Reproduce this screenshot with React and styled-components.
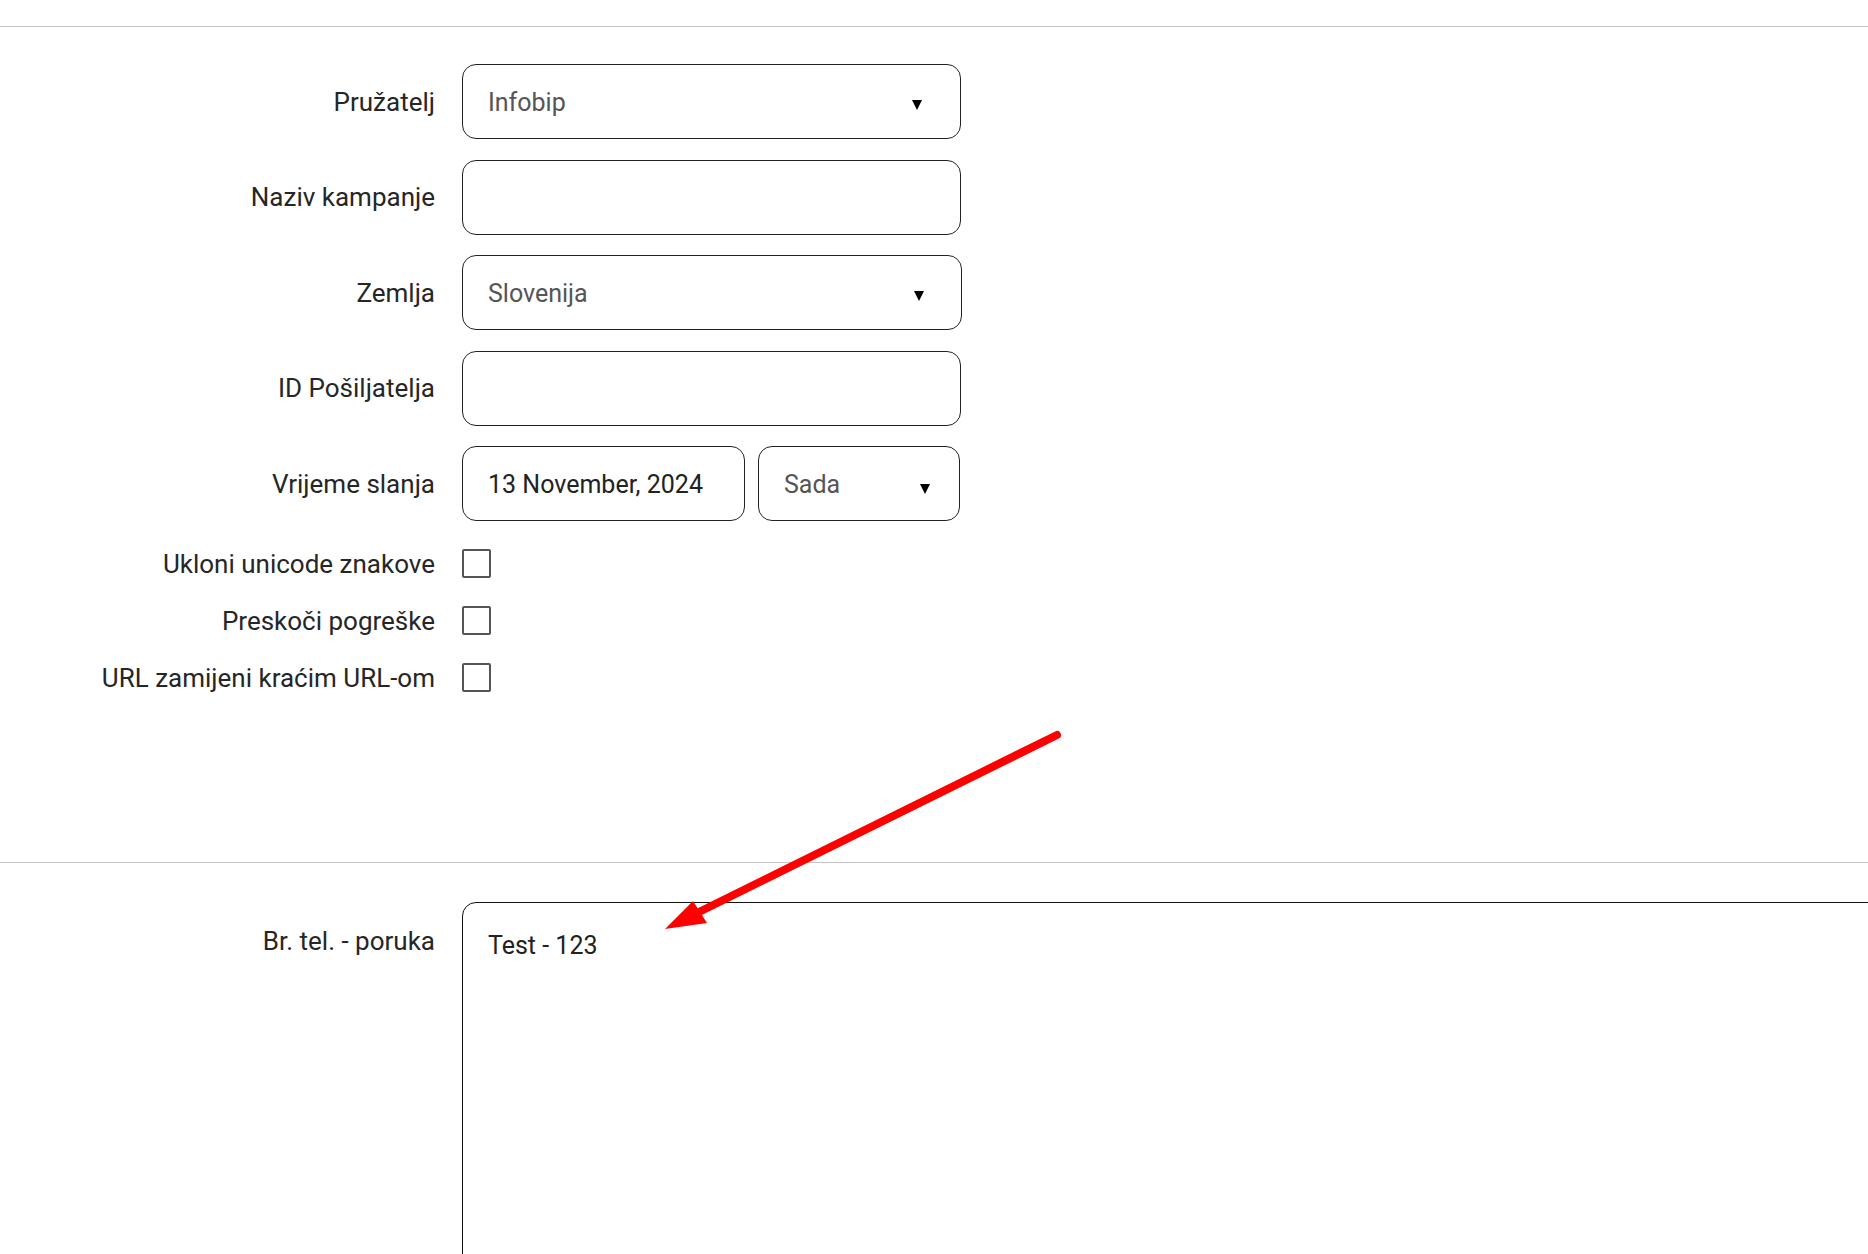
import React from "react";
import styled, { createGlobalStyle } from "styled-components";

const GlobalStyle = createGlobalStyle`
  html, body {
    margin: 0;
    padding: 0;
    background: #fff;
  }
  body {
    font-family: Roboto, "Liberation Sans", Arial, sans-serif;
    overflow: hidden;
  }
`

const Page = styled.div`
  position: relative;
  width: 1868px;
  height: 1254px;
  overflow: hidden;
  padding-top: 26px;
  box-sizing: border-box;
`

const Divider = styled.hr`
  margin: 0;
  border: 0;
  height: 1px;
  background: #c4c4c4;
`

const Section = styled.div`
  display: flex;
  flex-direction: column;
  padding: 37px 0 170px;
`

const FieldGroup = styled.div`
  display: flex;
  flex-direction: column;
  gap: ${p => p.gap}px;
  margin-top: ${p => p.top || 0}px;
`

const Row = styled.div`
  display: flex;
  align-items: center;
  gap: 27px;
  height: ${p => p.h}px;
`

const Label = styled.label`
  width: 435px;
  flex-shrink: 0;
  text-align: right;
  font-size: 26px;
  line-height: 30px;
  color: #262626;
  margin-top: ${p => p.offset || 0}px;
`

const Controls = styled.div`
  display: flex;
  gap: 13px;
  height: 100%;
`

const Box = styled.div`
  box-sizing: border-box;
  width: ${p => p.w}px;
  height: 100%;
  border: 1px solid #222;
  border-radius: 14px;
  display: flex;
  align-items: center;
  justify-content: space-between;
  padding: 2px ${p => p.pr || 25}px 0 25px;
  font-size: 25px;
  color: ${p => (p.muted ? "#555" : "#222")};
`

const Caret = styled.svg`
  width: 10px;
  height: 10px;
  margin-top: ${p => p.drop || 6}px;
`

const Check = styled.span`
  box-sizing: border-box;
  width: 29px;
  height: 29px;
  border: 2.5px solid #555;
  border-radius: 2px;
  display: inline-block;
`

const MessageRow = styled.div`
  display: flex;
  align-items: flex-start;
  gap: 27px;
  padding-top: 39px;
`

const TextArea = styled.div`
  box-sizing: border-box;
  flex-shrink: 0;
  width: 1500px;
  height: 420px;
  border: 1px solid #111;
  border-width: 1.5px 1px 1px 1.5px;
  border-radius: 14px 0 0 0;
  padding: 28px 25px;
  font-size: 25px;
  line-height: 30px;
  color: #222;
`

const Arrow = styled.svg`
  position: absolute;
  left: 0;
  top: 0;
  pointer-events: none;
`

function SelectBox({ w, value, pr, drop }) {
  return (
    <Box w={w} muted pr={pr}>
      <span>{value}</span>
      <Caret viewBox="0 0 10 10" drop={drop}>
        <polygon points="0,0 10,0 5,10" fill="#000" />
      </Caret>
    </Box>
  )
}

export default function App() {
  return (
    <Page>
      <GlobalStyle />
      <Divider />
      <Section>
        <FieldGroup gap={20.5}>
          <Row h={75}>
            <Label>Pružatelj</Label>
            <Controls>
              <SelectBox w={499} value="Infobip" pr={38} drop={4} />
            </Controls>
          </Row>
          <Row h={75}>
            <Label>Naziv kampanje</Label>
            <Controls>
              <Box w={499} />
            </Controls>
          </Row>
          <Row h={75}>
            <Label>Zemlja</Label>
            <Controls>
              <SelectBox w={500} value="Slovenija" pr={37} drop={4} />
            </Controls>
          </Row>
          <Row h={75}>
            <Label>ID Pošiljatelja</Label>
            <Controls>
              <Box w={499} />
            </Controls>
          </Row>
          <Row h={75}>
            <Label>Vrijeme slanja</Label>
            <Controls>
              <Box w={283}>13 November, 2024</Box>
              <SelectBox w={202} value="Sada" pr={29} drop={8} />
            </Controls>
          </Row>
        </FieldGroup>
        <FieldGroup gap={28} top={28}>
          <Row h={29}>
            <Label>Ukloni unicode znakove</Label>
            <Check />
          </Row>
          <Row h={29}>
            <Label>Preskoči pogreške</Label>
            <Check />
          </Row>
          <Row h={29}>
            <Label>URL zamijeni kraćim URL-om</Label>
            <Check />
          </Row>
        </FieldGroup>
      </Section>
      <Divider />
      <MessageRow>
        <Label offset={24}>Br. tel. - poruka</Label>
        <TextArea>Test - 123</TextArea>
      </MessageRow>
      <Arrow width="1868" height="1254" viewBox="0 0 1868 1254">
        <line x1="1057" y1="735" x2="695" y2="914" stroke="#ff0000" strokeWidth="8" strokeLinecap="round" />
        <polygon points="665,929 693,901 707,923" fill="#ff0000" />
      </Arrow>
    </Page>
  )
}
